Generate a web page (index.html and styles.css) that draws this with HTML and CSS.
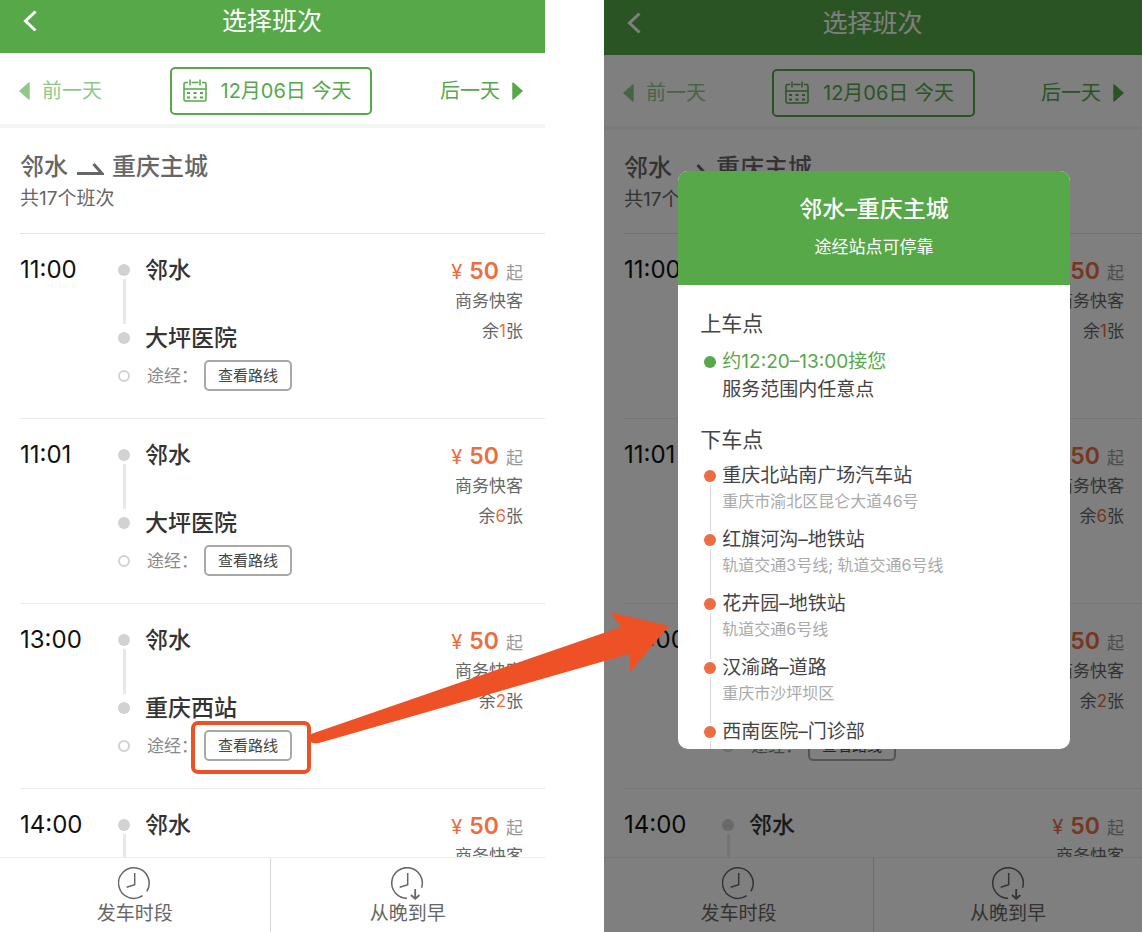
FILE: index.html
```
<!DOCTYPE html>
<html lang="zh-CN">
<head>
    <meta charset="UTF-8">
    <meta name="viewport" content="width=device-width, initial-scale=1.0">
    <title>选择班次</title>
    <link rel="stylesheet" href="styles.css">
</head>
<body>
    <svg class="icon-defs" aria-hidden="true">
        <symbol id="icon-back" viewBox="0 0 14 22">
            <path d="M12.5 1.5L2.5 11l10 9.5" fill="none" stroke="currentColor" stroke-width="3"/>
        </symbol>
        <symbol id="icon-prev" viewBox="0 0 11 18">
            <path d="M10 1v16L1 9z" fill="currentColor" stroke="currentColor" stroke-width="1.5" stroke-linejoin="round"/>
        </symbol>
        <symbol id="icon-next" viewBox="0 0 11 18">
            <path d="M1 1v16L10 9z" fill="currentColor" stroke="currentColor" stroke-width="1.5" stroke-linejoin="round"/>
        </symbol>
        <symbol id="icon-calendar" viewBox="0 0 24 24">
            <path d="M5 3.5H2.5Q1 3.500 1 5v15.500Q1 22 2.500 22h19Q23 22 23 20.500V5Q23 3.500 21.500 3.500H19M8.500 3.500h7M1 10h22M7 .5v6M17 .5v6" fill="none" stroke="currentColor" stroke-width="1.5"/>
            <path d="M4 13h3v2H4zM10.500 13h3v2h-3zM17 13h3v2h-3zM4 17.500h3v2H4zM10.500 17.500h3v2h-3zM17 17.500h3v2h-3z" fill="currentColor"/>
        </symbol>
        <symbol id="icon-arrow" viewBox="0 0 27 14">
            <path d="M0 11.500h25L16.500 2" fill="none" stroke="currentColor" stroke-width="3"/>
        </symbol>
        <symbol id="icon-clock" viewBox="0 0 33 33">
            <path d="M24.600 28.700A15.300 15.300 0 1 1 28.800 24.300M16.700 6v11.700L8.700 20.300" fill="none" stroke="currentColor" stroke-width="1.5"/>
        </symbol>
        <symbol id="icon-clock-down" viewBox="0 0 33 33">
            <path d="M16 31.300A15.300 15.300 0 1 1 30.600 20.700M16.700 6v11.700L8.700 20.300" fill="none" stroke="currentColor" stroke-width="1.5"/>
            <path d="M24.200 22v9.500M20 28l4.200 3.800L28.400 28" fill="none" stroke="currentColor" stroke-width="1.800"/>
        </symbol>
    </svg>

    <div class="phone">
        <header class="navbar">
            <button type="button" class="back-btn" aria-label="返回"><svg class="icon-back"><use href="#icon-back"/></svg></button>
            <h1>选择班次</h1>
        </header>
        <div class="date-bar">
            <button type="button" class="day-btn day-prev"><svg><use href="#icon-prev"/></svg>前一天</button>
            <button type="button" class="date-btn"><svg><use href="#icon-calendar"/></svg>12月06日 今天</button>
            <button type="button" class="day-btn day-next">后一天<svg><use href="#icon-next"/></svg></button>
        </div>
        <div class="route">
            <h2>邻水<svg><use href="#icon-arrow"/></svg>重庆主城</h2>
            <p>共17个班次</p>
        </div>
        <div class="trips" data-highlight="2"></div>
        <nav class="tabbar">
            <button type="button"><svg><use href="#icon-clock"/></svg>发车时段</button>
            <button type="button"><svg><use href="#icon-clock-down"/></svg>从晚到早</button>
        </nav>
    </div>

    <div class="phone phone-dimmed">
        <header class="navbar">
            <button type="button" class="back-btn" aria-label="返回"><svg class="icon-back"><use href="#icon-back"/></svg></button>
            <h1>选择班次</h1>
        </header>
        <div class="date-bar">
            <button type="button" class="day-btn day-prev"><svg><use href="#icon-prev"/></svg>前一天</button>
            <button type="button" class="date-btn"><svg><use href="#icon-calendar"/></svg>12月06日 今天</button>
            <button type="button" class="day-btn day-next">后一天<svg><use href="#icon-next"/></svg></button>
        </div>
        <div class="route">
            <h2>邻水<svg><use href="#icon-arrow"/></svg>重庆主城</h2>
            <p>共17个班次</p>
        </div>
        <div class="trips"></div>
        <nav class="tabbar">
            <button type="button"><svg><use href="#icon-clock"/></svg>发车时段</button>
            <button type="button"><svg><use href="#icon-clock-down"/></svg>从晚到早</button>
        </nav>

        <div class="mask">
            <div class="modal" role="dialog" aria-labelledby="modalTitle">
                <div class="modal-header">
                    <h2 id="modalTitle">邻水–重庆主城</h2>
                    <p>途经站点可停靠</p>
                </div>
                <div class="modal-body">
                    <h3>上车点</h3>
                    <ul class="points pickup">
                        <li>
                            <span class="rail"><i class="dot"></i></span>
                            <div>
                                <strong>约12:20–13:00接您</strong>
                                <p>服务范围内任意点</p>
                            </div>
                        </li>
                    </ul>
                    <h3>下车点</h3>
                    <ul class="points dropoff">
                        <li>
                            <span class="rail"><i class="dot"></i><i class="line"></i></span>
                            <div><strong>重庆北站南广场汽车站</strong><p>重庆市渝北区昆仑大道46号</p></div>
                        </li>
                        <li>
                            <span class="rail"><i class="dot"></i><i class="line"></i></span>
                            <div><strong>红旗河沟–地铁站</strong><p>轨道交通3号线; 轨道交通6号线</p></div>
                        </li>
                        <li>
                            <span class="rail"><i class="dot"></i><i class="line"></i></span>
                            <div><strong>花卉园–地铁站</strong><p>轨道交通6号线</p></div>
                        </li>
                        <li>
                            <span class="rail"><i class="dot"></i><i class="line"></i></span>
                            <div><strong>汉渝路–道路</strong><p>重庆市沙坪坝区</p></div>
                        </li>
                        <li>
                            <span class="rail"><i class="dot"></i><i class="line"></i></span>
                            <div><strong>西南医院–门诊部</strong></div>
                        </li>
                    </ul>
                </div>
            </div>
        </div>
    </div>

    <svg class="pointer" viewBox="0 0 360 134" aria-hidden="true">
        <path d="M0 123L310 16 299 1 358 15 319 61 318 43 8 132Q2 133 0 131z" fill="#ef5126"/>
    </svg>

    <script>
        const trips = [
            { time: '11:00', from: '邻水', to: '大坪医院', price: 50, left: 1 },
            { time: '11:01', from: '邻水', to: '大坪医院', price: 50, left: 6 },
            { time: '13:00', from: '邻水', to: '重庆西站', price: 50, left: 2 },
            { time: '14:00', from: '邻水', to: '重庆西站', price: 50, left: 3 }
        ];

        function tripHtml(trip, highlighted) {
            return `
                <article class="trip">
                    <time>${trip.time}</time>
                    <ul class="stops">
                        <li class="stop-from"><span class="rail"><i class="dot"></i><i class="line"></i></span>${trip.from}</li>
                        <li><span class="rail"><i class="dot"></i></span>${trip.to}</li>
                        <li class="stop-via">
                            <span class="rail"><i class="dot dot-open"></i></span>
                            <span class="via-label">途经：</span>
                            <span class="via-action${highlighted ? ' highlighted' : ''}"><button type="button">查看路线</button></span>
                        </li>
                    </ul>
                    <div class="fare">
                        <p class="price"><span>¥</span><b>${trip.price}</b>起</p>
                        <p>商务快客</p>
                        <p>余<em>${trip.left}</em>张</p>
                    </div>
                </article>`;
        }

        document.querySelectorAll('.trips').forEach(list => {
            const marked = Number(list.dataset.highlight);
            list.innerHTML = trips.map((trip, i) => tripHtml(trip, marked > 0 && i === marked)).join('');
        });
    </script>
</body>
</html>
```
FILE: styles.css
```
:root {
    --green: #56a849;
    --orange: #ec6d40;
    --marker: #ef5126;
}

* {
    box-sizing: border-box;
}

body {
    font-family: Inter, "Noto Sans CJK SC", sans-serif;
    margin: 0;
    height: 100vh;
    display: grid;
    grid-template-columns: 545fr 538fr;
    grid-template-rows: 100vh;
    column-gap: 59px;
    background: #fff;
    color: #666;
    overflow: hidden;
    position: relative;
}

h1, h2, h3, p, ul {
    margin: 0;
    padding: 0;
}

ul {
    list-style: none;
}

i, em {
    font-style: normal;
}

button {
    font: inherit;
    color: inherit;
    background: none;
    border: none;
    padding: 0;
    cursor: pointer;
}

.icon-defs {
    display: none;
}

.phone {
    --edge: 22px;
    display: flex;
    flex-direction: column;
    min-width: 0;
    height: 100%;
    background: #fff;
    position: relative;
    overflow: hidden;
}

.phone-dimmed {
    --edge: 18px;
}

/* top bar */
.navbar {
    flex: none;
    display: grid;
    grid-template-columns: 1fr auto 1fr;
    align-items: center;
    height: 53px;
    padding: 0 24px 11px 23px;
    background: var(--green);
    color: #fff;
}

.phone-dimmed .navbar {
    height: 55px;
    padding-bottom: 9px;
}

.navbar h1 {
    font-size: 25px;
    font-weight: 400;
    line-height: 36px;
}

.back-btn {
    justify-self: start;
    display: flex;
}

.icon-back {
    width: 14px;
    height: 22px;
}

.date-bar {
    flex: none;
    display: grid;
    grid-template-columns: 1fr auto 1fr;
    align-items: center;
    padding: 14px var(--edge) 9px 19px;
    border-bottom: 4px solid #f4f4f4;
    font-size: 20px;
    line-height: 28px;
    color: var(--green);
}

.day-btn {
    display: flex;
    align-items: center;
    gap: 12px;
}

.day-btn svg {
    width: 11px;
    height: 18px;
}

.day-prev {
    color: #8fc98a;
}

.day-next {
    justify-self: end;
}

.date-btn {
    display: flex;
    align-items: center;
    gap: 14px;
    height: 48px;
    padding: 0 19px 0 11px;
    border: 2px solid var(--green);
    border-radius: 5px;
}

.date-btn svg {
    width: 24px;
    height: 24px;
}

.route {
    flex: none;
    margin-left: 20px;
    padding: 21px 0 20px;
    border-bottom: 1px solid #e4e4e4;
}

.phone-dimmed .route {
    padding: 20px 0 19px;
}

.route h2 {
    display: flex;
    align-items: center;
    font-size: 24px;
    font-weight: 500;
    line-height: 36px;
}

.route h2 svg {
    width: 27px;
    height: 14px;
    margin: 4px 8px 0 9px;
}

.route p {
    font-size: 19px;
    line-height: 28px;
}

/* trip list */
.trips {
    flex: 1;
    min-height: 0;
    overflow: hidden;
    margin-left: 20px;
}

.trip {
    display: grid;
    grid-template-columns: 98px 1fr auto;
    padding: 22px var(--edge) 27px 0;
    border-bottom: 1px solid #ebebeb;
}

.trip time {
    font-size: 24px;
    line-height: 28px;
    color: #111;
}

.stops li {
    display: flex;
    gap: 15px;
    font-size: 23px;
    font-weight: 500;
    line-height: 28px;
    color: #333;
}

.stops .stop-from {
    height: 68px;
}

.rail {
    flex: none;
    display: flex;
    flex-direction: column;
    align-items: center;
    width: 12px;
    padding-top: 8px;
}

.dot {
    flex: none;
    width: 12px;
    height: 12px;
    border-radius: 50%;
    background: #d2d2d2;
}

.dot-open {
    background: #fff;
    border: 2px solid #d2d2d2;
}

.line {
    flex: 1;
    width: 3px;
    margin-top: 3px;
    background: #e8e8e8;
}

.stops .stop-via {
    align-items: center;
    margin-top: 8px;
    font-size: 17px;
    font-weight: 400;
    color: #888;
}

.stop-via .rail {
    padding-top: 0;
}

.via-label {
    margin-left: 2px;
}

.via-action {
    position: relative;
    margin-left: -9px;
}

.via-action button {
    display: block;
    height: 31px;
    padding: 0 12px;
    border: 2px solid #a8a8a8;
    border-radius: 5px;
    font-size: 15px;
    line-height: 27px;
    color: #444;
}

.highlighted::after {
    content: "";
    position: absolute;
    inset: -9px -19px -13px -13px;
    border: 4px solid var(--marker);
    border-radius: 7px;
    pointer-events: none;
}

.fare {
    text-align: right;
    font-size: 17px;
    line-height: 30px;
}

.price {
    display: flex;
    align-items: baseline;
    justify-content: flex-end;
    gap: 7px;
    height: 30px;
    color: #999;
}

.price span {
    font-size: 20px;
    color: var(--orange);
}

.price b {
    font-size: 23px;
    font-weight: 600;
    color: var(--orange);
}

.fare em {
    color: var(--orange);
}

/* bottom bar */
.tabbar {
    flex: none;
    display: grid;
    grid-template-columns: 98fr 100fr;
    height: 75px;
    border-top: 1px solid #ececec;
    background: #fff;
}

.phone-dimmed .tabbar {
    grid-template-columns: 1fr 1fr;
}

.tabbar button {
    display: flex;
    flex-direction: column;
    align-items: center;
    padding-top: 9px;
    font-size: 19px;
    line-height: 28px;
}

.tabbar button + button {
    border-left: 1px solid #d8d8d8;
}

.tabbar svg {
    width: 33px;
    height: 33px;
}

/* route popup */
.mask {
    position: absolute;
    inset: 0;
    display: flex;
    justify-content: center;
    align-items: flex-start;
    padding: 171px 0 0 2px;
    background: rgba(0, 0, 0, 0.5);
}

.modal {
    width: 73%;
    height: 62vh;
    display: flex;
    flex-direction: column;
    overflow: hidden;
    border-radius: 10px;
    background: #fff;
}

.modal-header {
    flex: none;
    padding: 22px 0 26px;
    background: var(--green);
    color: #fff;
    text-align: center;
}

.modal-header h2 {
    font-size: 23px;
    font-weight: 500;
    line-height: 32px;
}

.modal-header p {
    margin-top: 10px;
    font-size: 17px;
    line-height: 24px;
}

.modal-body {
    flex: 1;
    min-height: 0;
    overflow: hidden;
    padding: 24px 22px 0;
    color: #444;
}

.modal-body h3 {
    font-size: 21px;
    font-weight: 400;
    line-height: 30px;
}

.points {
    padding: 9px 0 21px 4px;
    font-size: 19px;
    line-height: 28px;
}

.dropoff {
    padding-top: 7px;
}

.points li {
    display: flex;
    gap: 6px;
}

.points strong {
    display: block;
    font-weight: 400;
}

.pickup strong {
    color: var(--green);
}

.pickup .dot {
    background: var(--green);
}

.dropoff li {
    height: 64px;
}

.dropoff p {
    font-size: 16px;
    line-height: 23px;
    color: #aaa;
}

.dropoff .dot {
    background: var(--orange);
}

.dropoff .line {
    width: 1px;
    margin-bottom: -5px;
    background: #d8d8d8;
}

/* arrow from the marked button to the popup */
.pointer {
    position: absolute;
    left: 311px;
    top: 611px;
    width: 360px;
    height: 134px;
    pointer-events: none;
}
```
